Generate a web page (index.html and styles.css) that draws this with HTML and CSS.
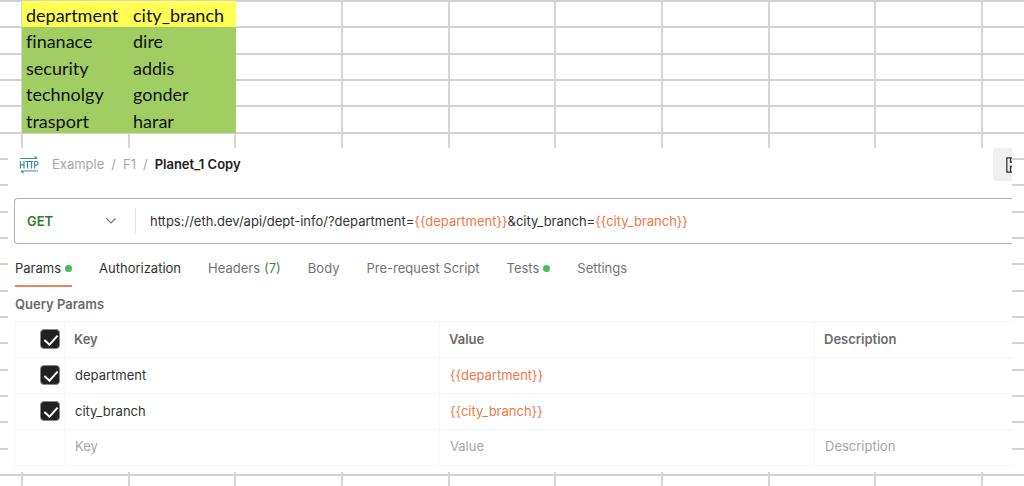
FILE: index.html
```html
<!doctype html>
<html lang="en">
<head>
    <meta charset="utf-8">
    <title>Planet_1 Copy</title>
    <link rel="stylesheet" href="styles.css">
</head>
<body>

<main class="sheet">

    <table class="data">
        <thead>
            <tr><th>department</th><th>city_branch</th></tr>
        </thead>
        <tbody>
            <tr><td>finanace</td><td>dire</td></tr>
            <tr><td>security</td><td>addis</td></tr>
            <tr><td>technolgy</td><td>gonder</td></tr>
            <tr><td>trasport</td><td>harar</td></tr>
        </tbody>
    </table>

    <section class="request">

        <header class="request-head">
            <svg class="http-icon" width="20" height="18" viewBox="0 0 20 18" fill="none" stroke="#3f8ca3" stroke-width="1.2">
                <path d="M1 2.500H18.500M15.500 .5L18 2.500M19 15H2M4.500 17L2 15"/>
                <path d="M1.500 5V12.500M5 5V12.500M1.500 8.800H5M6.500 5.500H10.500M8.500 5.500V12.500M10.500 5.500H14M12.500 5.500V12.500M15.500 12.500V5.500H17.500Q19 5.500 19 7.300T17.500 9.200H15.500"/>
            </svg>
            <nav class="crumbs">
                <a href="#">Example</a>
                <span>/</span>
                <a href="#">F1</a>
                <span>/</span>
                <strong>Planet_1 Copy</strong>
            </nav>
            <button type="button" class="save" aria-label="Save">
                <svg width="16" height="16" viewBox="0 0 16 16" fill="none" stroke="#333" stroke-width="1.3">
                    <path d="M.8 .8H11L15.200 5V15.200H.8ZM4.500 1V5H10V1M4.500 15V9.500H11.500V15"/>
                </svg>
            </button>
        </header>

        <form class="url-bar">
            <div class="method">
                <select aria-label="Method">
                    <option>GET</option>
                    <option>POST</option>
                    <option>PUT</option>
                </select>
                <svg width="10" height="6" viewBox="0 0 10 6" fill="none" stroke="#777" stroke-width="1.2">
                    <path d="M.5 .5L5 5L9.500 .5"/>
                </svg>
            </div>
            <div class="url" role="textbox" aria-label="Request URL" contenteditable="true" spellcheck="false">https://eth.dev/api/dept-info/?department=<span class="var">{{department}}</span>&amp;city_branch=<span class="var">{{city_branch}}</span></div>
        </form>

        <nav class="tabs">
            <button type="button" class="active">Params <i class="dot"></i></button>
            <button type="button" class="dark">Authorization</button>
            <button type="button">Headers <span class="count">(7)</span></button>
            <button type="button">Body</button>
            <button type="button">Pre-request Script</button>
            <button type="button">Tests <i class="dot"></i></button>
            <button type="button">Settings</button>
        </nav>

        <h2>Query Params</h2>

        <table class="params">
            <thead>
                <tr>
                    <th class="tick"><input type="checkbox" aria-label="Select all" checked></th>
                    <th class="key">Key</th>
                    <th class="value">Value</th>
                    <th>Description</th>
                </tr>
            </thead>
            <tbody>
                <tr>
                    <td class="tick"><input type="checkbox" aria-label="department" checked></td>
                    <td>department</td>
                    <td class="var">{{department}}</td>
                    <td></td>
                </tr>
                <tr>
                    <td class="tick"><input type="checkbox" aria-label="city_branch" checked></td>
                    <td>city_branch</td>
                    <td class="var">{{city_branch}}</td>
                    <td></td>
                </tr>
                <tr class="new">
                    <td class="tick"></td>
                    <td><input type="text" aria-label="Key" placeholder="Key"></td>
                    <td><input type="text" aria-label="Value" placeholder="Value"></td>
                    <td><input type="text" aria-label="Description" placeholder="Description"></td>
                </tr>
            </tbody>
        </table>

    </section>

</main>

</body>
</html>
```
FILE: styles.css
```css
* {
    box-sizing: border-box;
}

body {
    margin: 0;
    background: #fff;
    color: #333;
    font: 13px/20px Inter, sans-serif;
}

button, input, select {
    font: inherit;
    color: inherit;
    border: 0;
    padding: 0;
    margin: 0;
    background: none;
}

/* spreadsheet behind everything: 9.6 columns, 18.5 rows */
.sheet {
    min-height: 100vh;
    padding-bottom: 15px;
    overflow: hidden;
    background-image:
        repeating-linear-gradient(to bottom, #d2d2d2 0 2px, transparent 2px calc(100% / 18.5)),
        repeating-linear-gradient(to right, #d6d6d6 0 2px, transparent 2px calc(100% / 9.6));
    background-position: 0 0, 21px 0;
}

.data {
    width: 214px;
    height: 132px;
    margin: 1px 0 15px 22px;
    border-collapse: collapse;
    table-layout: fixed;
    color: #111;
    background: #a0ce63;
    font: 18px/22px Lato, sans-serif;
    font-variant-ligatures: none;
}

.data th, .data td {
    padding: 3px 0 1px 4px;
    text-align: left;
    font-weight: normal;
}

.data th {
    background: #ffff54;
}

.request {
    margin: 0 12px 0 8px;
    padding: 0 0 6px 6px;
    background: #fff;
}

.request-head {
    display: flex;
    align-items: center;
    height: 33px;
    margin-bottom: 17px;
    padding-left: 5px;
}

.http-icon {
    margin-right: 13px;
}

.crumbs {
    display: flex;
    gap: 7px;
    flex: 1;
    padding-bottom: 2px;
    color: #a6a6a6;
}

.crumbs a {
    color: inherit;
    text-decoration: none;
}

.crumbs strong {
    color: #212121;
    font-weight: 600;
}

.save {
    width: 19px;
    height: 33px;
    padding-left: 13px;
    overflow: hidden;
    background: #f0f0f0;
    border-radius: 4px 0 0 4px;
}

.save svg {
    display: block;
}

.url-bar {
    display: flex;
    align-items: center;
    height: 46px;
    border: 1px solid #b3b3b3;
    border-right: 0;
    border-radius: 4px 0 0 4px;
}

.method {
    display: flex;
    align-items: center;
    width: 121px;
    height: 26px;
    padding: 0 19px 0 12px;
    border-right: 1px solid #e6e6e6;
}

.method select {
    flex: 1;
    appearance: none;
    color: #2e7d32;
    font-weight: 600;
}

.url {
    flex: 1;
    padding-left: 14px;
    white-space: nowrap;
    overflow: hidden;
}

.var {
    color: #f07848;
}

.tabs {
    display: flex;
    gap: 27px;
    padding: 0 1px;
}

.tabs button {
    display: flex;
    align-items: center;
    gap: 4px;
    padding: 14px 0 7px;
    border-bottom: 2px solid transparent;
    color: #737373;
}

.tabs .active {
    border-color: #f0845c;
}

.tabs .active, .tabs .dark {
    color: #333;
}

.dot {
    width: 7px;
    height: 7px;
    border-radius: 50%;
    background: #4cb85c;
}

.count {
    color: #3a8a46;
}

h2 {
    margin: 7px 1px;
    color: #6b6b6b;
    font-size: 13px;
    font-weight: 600;
}

.params {
    width: calc(100% - 1px);
    margin-left: 1px;
    border-collapse: collapse;
    table-layout: fixed;
}

.params th, .params td {
    height: 36px;
    padding: 0 10px 1px;
    border: 1px solid #f5f5f5;
    border-right: 0;
    text-align: left;
}

.params th {
    color: #6b6b6b;
    font-weight: 600;
    padding-left: 9px;
}

.params .tick {
    width: 49px;
    padding: 0 0 1px 24px;
}

.params .key, .params .value {
    width: 375px;
}

.params input[type='checkbox'] {
    display: block;
    appearance: none;
    width: 20px;
    height: 20px;
    border: 1px solid #888;
    border-radius: 4px;
    background: #212121;
}

.params input[type='checkbox']:checked:after {
    content: "";
    display: block;
    width: 6px;
    height: 11px;
    margin: 2px 6px;
    border: solid #fff;
    border-width: 0 2px 2px 0;
    transform: rotate(42deg);
}

.params input[type='text'] {
    display: block;
    width: 100%;
}

.params .new td {
    padding-bottom: 3px;
}

.params input::placeholder {
    color: #a6a6a6;
}
```
